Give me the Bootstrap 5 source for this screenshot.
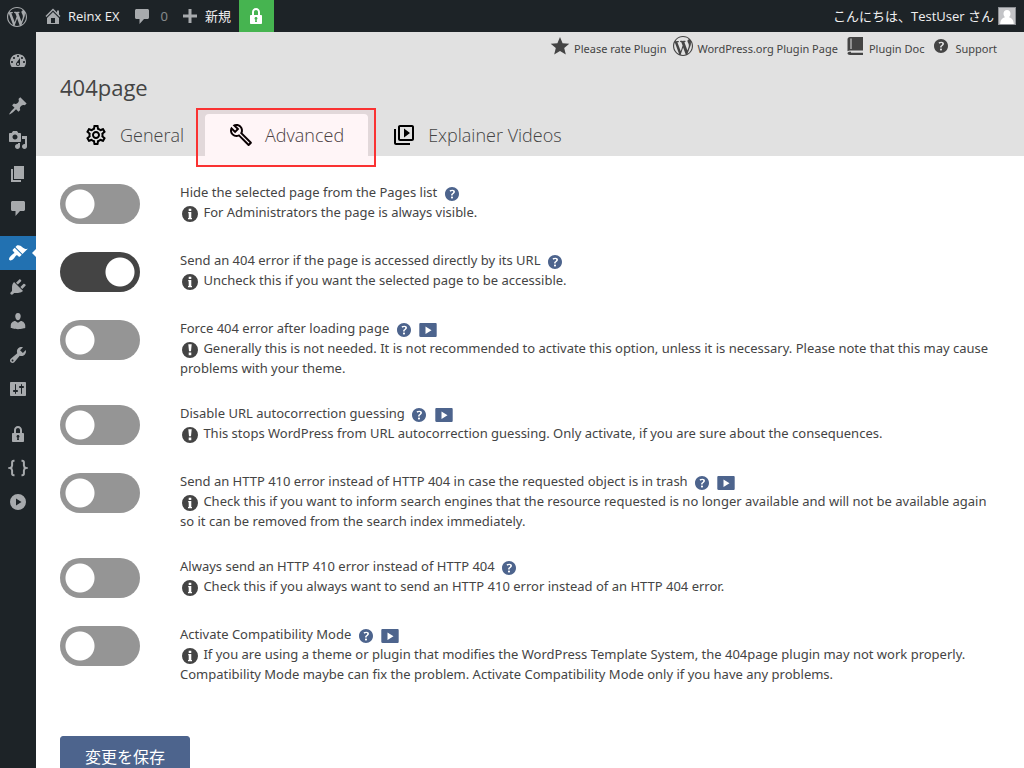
<!DOCTYPE html>
<html lang="ja">
<head>
<meta charset="utf-8">
<meta name="viewport" content="width=device-width, initial-scale=1">
<title>404page</title>
<link rel="stylesheet" href="https://cdn.jsdelivr.net/npm/bootstrap@5.3.0/dist/css/bootstrap.min.css">
<style>
  body { font-family: "Open Sans", "Noto Sans CJK JP", sans-serif; font-size: 13px; line-height: 20px; color: #444; background: #fff; }
  a { color: inherit; text-decoration: none; }
  svg { fill: currentColor; flex: none; }
  .i20 { width: 20px; height: 20px; }
  .i24 { width: 24px; height: 24px; }
  .admin-bar { height: 32px; background: #1d2327; color: #f0f0f1; z-index: 1030; padding-left: 7px; }
  .admin-bar svg { color: #a7aaad; }
  .bar-item { margin-right: 12px; }
  .bar-item svg { margin-right: 5px; }
  .admin-bar .ssl { width: 35px; background: #46b450; }
  .admin-bar .ssl svg { color: #fff; }
  .avatar { width: 18px; height: 18px; border: 1px solid #8c8f94; background: #c3c4c7; }
  .admin-menu { width: 36px; background: #1d2327; color: #a7aaad; padding-top: 12px; }
  .admin-menu a { height: 34px; }
  .admin-menu .gap-before { margin-top: 11px; }
  .admin-menu .current { background: #2271b1; color: #fff; }
  .admin-menu .current::after { content: ""; position: absolute; right: 0; top: 13px; border: 4px solid transparent; border-left: 0; border-right-color: #fff; }
  .plugin-head { background: #e1e1e1; }
  .plugin-links { font-family: "Noto Sans", sans-serif; font-size: 11px; height: 28px; padding-right: 27px; gap: 7px; }
  .plugin-links span { padding-top: 5px; }
  .plugin-head h1 { font-size: 22px; line-height: 30px; margin: 12px 0; font-weight: 400; }
  .tab-row { font-size: 18px; height: 42px; font-weight: 300; }
  .tab-row a { padding: 0 21px 0 24px; gap: 12px; border-radius: 4px 4px 0 0; }
  .tab-row svg { color: #000; }
  .tab-row .active { background: #fff; padding-right: 24px; }
  .highlight { position: absolute; inset: -6px -8px -11px -9px; border: 2px solid #fa3232; background: rgba(255, 0, 50, .04); pointer-events: none; }
  .options { padding: 26px 24px 0; font-family: "Noto Sans", "Noto Sans CJK JP", sans-serif; }
  .option { min-height: 43px; margin-bottom: 25px; gap: 40px; }
  .form-check-input.toggle { width: 80px; height: 40px; margin: 2px 0 0; flex: none; border: 0; border-radius: 20px; background: #959595 radial-gradient(circle, #fff 14px, transparent 15px) 0 0 / 40px 40px no-repeat; }
  .form-check-input.toggle:checked { background-color: #444; background-position: 40px 0; }
  .hint { color: #4d648d; }
  .hint svg { margin: -2px 0 -3px 1px; }
  .note svg { width: 20px; height: 20px; margin: -2px 0 -2px; vertical-align: middle; }
  .save { --bs-btn-bg: #4d648d; --bs-btn-border-color: #4d648d; --bs-btn-color: #fff; --bs-btn-font-size: 16px; --bs-btn-line-height: 24px; --bs-btn-padding-y: 8px; --bs-btn-padding-x: 24px; --bs-btn-border-radius: 3px; margin-top: 27px; }
</style>
</head>
<body>
<svg class="d-none" xmlns="http://www.w3.org/2000/svg">
  <symbol id="wp" viewBox="0 0 20 20"><path d="M20 10c0-5.51-4.49-10-10-10C4.48 0 0 4.49 0 10c0 5.52 4.48 10 10 10 5.51 0 10-4.48 10-10zM7.78 15.37L4.37 6.22c.55-.02 1.17-.08 1.17-.08.5-.06.44-1.13-.06-1.11 0 0-1.45.11-2.37.11-.18 0-.37 0-.58-.01C4.12 2.69 6.87 1.11 10 1.11c2.33 0 4.45.87 6.05 2.34-.68-.11-1.65.39-1.65 1.58 0 .74.45 1.36.9 2.1.35.61.55 1.36.55 2.46 0 1.49-1.4 5-1.4 5l-3.03-8.37c.54-.02.82-.17.82-.17.5-.05.44-1.25-.06-1.22 0 0-1.44.12-2.38.12-.87 0-2.33-.12-2.33-.12-.5-.03-.56 1.2-.06 1.22l.92.08 1.26 3.41zM17.41 10c.24-.64.74-1.87.43-4.25.7 1.29 1.05 2.71 1.05 4.25 0 3.29-1.73 6.24-4.4 7.78.97-2.59 1.94-5.2 2.92-7.78zM6.1 18.09C3.12 16.65 1.11 13.53 1.11 10c0-1.3.23-2.48.72-3.59C3.25 10.3 4.67 14.2 6.1 18.09zm4.03-6.63l2.58 6.98c-.86.29-1.76.45-2.71.45-.79 0-1.57-.11-2.29-.33.81-2.38 1.62-4.74 2.42-7.1z"/></symbol>
  <symbol id="home" viewBox="0 0 20 20"><path d="M16 8.5l1.53 1.53-1.06 1.06L10 4.6l-6.47 6.49-1.06-1.06L10 2.5l4 4v-2h2v4zm-6-2.46l6 5.99V18H4v-5.97zM12 17v-5H8v5h4z"/></symbol>
  <symbol id="comment" viewBox="0 0 20 20"><path d="M4.500 3h11c.8 0 1.500.7 1.500 1.500v7c0 .8-.7 1.500-1.500 1.500H12l-4.500 5v-5h-3C3.700 13 3 12.300 3 11.500v-7C3 3.700 3.700 3 4.500 3z"/></symbol>
  <symbol id="plus" viewBox="0 0 20 20"><path d="M17 8.500v3h-5.500V17h-3v-5.500H3v-3h5.500V3h3v5.500z"/></symbol>
  <symbol id="lock" viewBox="0 0 20 20"><path d="M14 9h1c.55 0 1 .45 1 1v7c0 .55-.45 1-1 1H5c-.55 0-1-.45-1-1v-7c0-.55.45-1 1-1h1V6c0-2.210 1.790-4 4-4s4 1.790 4 4v3zm-2 0V6c0-1.100-.9-2-2-2s-2 .9-2 2v3h4zm-1 7l-.36-2.150c.51-.24.86-.75.86-1.350 0-.83-.67-1.500-1.500-1.500s-1.500.67-1.500 1.500c0 .6.35 1.110.86 1.350L9 16h2z"/></symbol>
  <symbol id="dashboard" viewBox="0 0 20 20"><path fill-rule="evenodd" d="M3.76 16h12.48c1.100-1.370 1.760-3.110 1.760-5 0-4.420-3.580-8-8-8s-8 3.580-8 8c0 1.890.66 3.630 1.760 5zM10 4c.55 0 1 .45 1 1s-.45 1-1 1-1-.45-1-1 .45-1 1-1zM6 6c.55 0 1 .45 1 1s-.45 1-1 1-1-.45-1-1 .45-1 1-1zm8 0c.55 0 1 .45 1 1s-.45 1-1 1-1-.45-1-1 .45-1 1-1zm-5.370 5.550L12 7v6c0 1.100-.9 2-2 2s-2-.9-2-2c0-.57.24-1.080.63-1.450zM4 10c.55 0 1 .45 1 1s-.45 1-1 1-1-.45-1-1 .45-1 1-1zm12 0c.55 0 1 .45 1 1s-.45 1-1 1-1-.45-1-1 .45-1 1-1zm-5 3c0-.55-.45-1-1-1s-1 .45-1 1 .45 1 1 1 1-.45 1-1z"/></symbol>
  <symbol id="pin" viewBox="0 0 20 20"><path d="M10.44 3.02l1.82-1.82 6.36 6.35-1.83 1.82c-1.05-.68-2.48-.57-3.41.36l-.75.75c-.92.93-1.04 2.35-.35 3.41l-1.83 1.82-2.41-2.41-2.8 2.79c-.42.42-3.38 2.71-3.8 2.29s1.86-3.39 2.28-3.81l2.79-2.79L4.1 9.36l1.83-1.82c1.05.69 2.48.57 3.4-.36l.75-.75c.93-.92 1.05-2.35.36-3.41z"/></symbol>
  <symbol id="media" viewBox="0 0 20 20"><path d="M13 11V4c0-.55-.45-1-1-1h-1.67L9 1H5L3.67 3H2c-.55 0-1 .45-1 1v7c0 .55.45 1 1 1h10c.55 0 1-.45 1-1zM7 4.500c1.380 0 2.500 1.120 2.500 2.500S8.380 9.500 7 9.500 4.500 8.380 4.500 7 5.620 4.500 7 4.500zM14 6h5v10.500c0 1.380-1.120 2.500-2.500 2.500S14 17.880 14 16.500s1.120-2.500 2.500-2.500c.17 0 .34.02.5.05V9h-3V6zm-4 8.050V13h2v3.500c0 1.380-1.120 2.500-2.500 2.500S7 17.880 7 16.500 8.120 14 9.500 14c.17 0 .34.02.5.05z"/></symbol>
  <symbol id="pages" viewBox="0 0 20 20"><path d="M6 15V2h10v13H6zm-1 1h8v2H3V5h2v11z"/></symbol>
  <symbol id="brush" viewBox="0 0 20 20"><path d="M14.48 11.06L7.41 3.99l1.5-1.5c.5-.56 2.3-.47 3.51.32 1.21.8 1.43 1.28 2.91 2.1 1.18.64 2.45 1.26 4.45.85zm-.71.71L6.7 4.7 4.93 6.47c-.39.39-.39 1.02 0 1.41l1.06 1.06c.39.39.39 1.03 0 1.42-.6.6-1.43 1.11-2.21 1.69-.35.26-.7.53-1.01.84C1.43 14.23.4 16.08 1.4 17.07c.99 1 2.84-.03 4.18-1.36.31-.31.58-.66.85-1.02.57-.78 1.08-1.61 1.69-2.21.39-.39 1.02-.39 1.41 0l1.06 1.06c.39.39 1.02.39 1.41 0z"/></symbol>
  <symbol id="plug" viewBox="0 0 20 20"><path d="M13.11 4.36L9.87 7.6 8 5.73l3.24-3.24c.35-.34 1.05-.2 1.56.32.52.51.66 1.21.31 1.55zm-8 1.77l.91-1.12 9.01 9.01-1.19.84c-.71.71-2.63 1.16-3.82 1.16H6.14L4.9 17.26c-.59.59-1.54.59-2.12 0-.59-.58-.59-1.53 0-2.12l1.24-1.24v-3.88c0-1.13.4-3.19 1.09-3.89zm7.26 3.97l3.24-3.24c.34-.35 1.04-.21 1.55.31.52.51.66 1.21.31 1.55l-3.24 3.25z"/></symbol>
  <symbol id="user" viewBox="0 0 20 20"><path d="M10 9.25c-2.27 0-2.73-3.44-2.73-3.44C7 4.02 7.82 2 9.97 2c2.16 0 2.98 2.02 2.71 3.81 0 0-.41 3.44-2.68 3.44zm0 2.57L12.72 10c2.39 0 4.52 2.33 4.52 4.53v2.49s-3.65 1.13-7.24 1.13c-3.65 0-7.24-1.13-7.24-1.13v-2.49c0-2.25 1.94-4.48 4.47-4.48z"/></symbol>
  <symbol id="wrench" viewBox="0 0 20 20"><path d="M16.68 9.77c-1.34 1.34-3.3 1.67-4.95.99l-5.41 6.52c-.99.99-2.59.99-3.58 0s-.99-2.59 0-3.57l6.52-5.42c-.68-1.65-.35-3.61.99-4.95 1.28-1.28 3.12-1.62 4.72-1.06l-2.89 2.89 2.82 2.82 2.86-2.87c.53 1.58.18 3.39-1.08 4.65zM3.81 16.21c.4.39 1.04.39 1.43 0 .4-.4.4-1.04 0-1.43-.39-.4-1.03-.4-1.43 0-.39.39-.39 1.03 0 1.43z"/></symbol>
  <symbol id="sliders" viewBox="0 0 20 20"><path d="M18 16V4c0-.55-.45-1-1-1H3c-.55 0-1 .45-1 1v12c0 .55.45 1 1 1h14c.55 0 1-.45 1-1zM8 11h1c.55 0 1 .45 1 1s-.45 1-1 1H8v1.5c0 .28-.22.5-.5.5s-.5-.22-.5-.5V13H6c-.55 0-1-.45-1-1s.45-1 1-1h1V5.5c0-.28.22-.5.5-.5s.5.22.5.5V11zm5-2h-1c-.55 0-1-.45-1-1s.45-1 1-1h1V5.5c0-.28.22-.5.5-.5s.5.22.5.5V7h1c.55 0 1 .45 1 1s-.45 1-1 1h-1v5.5c0 .28-.22.5-.5.5s-.5-.22-.5-.5V9z"/></symbol>
  <symbol id="braces" viewBox="0 0 20 20"><path d="M6.500 2.800H5.800c-1.200 0-1.700.6-1.700 1.700v2.900c0 1.400-.6 2.200-2 2.600 1.400.4 2 1.200 2 2.600v2.900c0 1.100.5 1.700 1.700 1.700h.7M13.500 2.800h.7c1.200 0 1.700.6 1.700 1.700v2.900c0 1.400.6 2.200 2 2.600-1.400.4-2 1.200-2 2.600v2.900c0 1.100-.5 1.700-1.700 1.700h-.7" fill="none" stroke="currentColor" stroke-width="2"/></symbol>
  <symbol id="playc" viewBox="0 0 20 20"><path fill-rule="evenodd" d="M10 2a8 8 0 1 0 0 16 8 8 0 0 0 0-16zM8 6.500l5.500 3.500L8 13.500z"/></symbol>
  <symbol id="star" viewBox="0 0 20 20"><path d="M10 1l2.600 6.200 6.700.5-5.100 4.300L15.800 18.500 10 15l-5.800 3.500L5.800 12 .7 7.700l6.700-.5z"/></symbol>
  <symbol id="book" viewBox="0 0 20 20"><path fill-rule="evenodd" d="M5 1h13v13.500H5c-1 0-1.800.3-2.500.8V3.500C2.500 2 3.500 1 5 1zM5.500 2.500v10.500h1V2.500zM5 15.700h1v1H18V19H5c-1.500 0-2.500-.7-2.500-1.700s1-1.600 2.500-1.600z"/></symbol>
  <symbol id="help" viewBox="0 0 20 20"><path d="M17 10c0-3.87-3.14-7-7-7-3.87 0-7 3.13-7 7s3.13 7 7 7c3.86 0 7-3.13 7-7zm-6.3 1.48H9.14v-.43c0-.38.08-.7.24-.98s.46-.57.88-.89c.41-.29.68-.53.81-.71.14-.18.2-.39.2-.62 0-.25-.09-.44-.28-.58-.19-.13-.45-.19-.79-.19-.58 0-1.25.19-2 .57l-.64-1.28c.87-.49 1.8-.74 2.77-.74.81 0 1.45.2 1.92.58.48.39.71.91.71 1.55 0 .43-.09.8-.29 1.11-.19.32-.57.67-1.11 1.06-.38.28-.61.49-.71.63-.1.15-.15.34-.15.57v.35zm-1.47 2.74c-.18-.17-.27-.42-.27-.73 0-.33.08-.58.26-.75s.43-.25.77-.25c.32 0 .57.09.75.26s.27.42.27.74c0 .3-.09.55-.27.72-.18.18-.43.27-.75.27-.33 0-.58-.09-.76-.26z"/></symbol>
  <symbol id="video" viewBox="0 0 20 20"><path fill-rule="evenodd" d="M2.500 3h15c.8 0 1.200.5 1.200 1.200v11.600c0 .8-.5 1.200-1.200 1.200h-15c-.8 0-1.200-.5-1.200-1.200V4.200c0-.8.5-1.200 1.200-1.200zM7.500 6.500v7.500l6-3.700z"/></symbol>
  <symbol id="info" viewBox="0 0 20 20"><path fill-rule="evenodd" d="M10 2a8 8 0 1 0 0 16 8 8 0 0 0 0-16zM8.700 4.800h2.600V7H8.700zM8.200 8h3.100v6h.7v1.200H8V14h.7V9.200h-.5z"/></symbol>
  <symbol id="warn" viewBox="0 0 20 20"><path fill-rule="evenodd" d="M10 2a8 8 0 1 0 0 16 8 8 0 0 0 0-16zM8.300 4.300h3.400l-.7 7H9zM8.700 12.600h2.600v2.600H8.700z"/></symbol>
  <symbol id="gear" viewBox="0 0 24 24"><path d="M19.43 12.98c.04-.32.07-.64.07-.98 0-.34-.03-.66-.07-.98l2.11-1.65c.19-.15.24-.42.12-.64l-2-3.46c-.09-.16-.26-.25-.44-.25-.06 0-.12.01-.17.03l-2.49 1c-.52-.4-1.08-.73-1.69-.98l-.38-2.65C14.46 2.18 14.25 2 14 2h-4c-.25 0-.46.18-.49.42l-.38 2.65c-.61.25-1.17.59-1.69.98l-2.49-1c-.06-.02-.12-.03-.18-.03-.17 0-.34.09-.43.25l-2 3.46c-.13.22-.07.49.12.64l2.11 1.65c-.04.32-.07.65-.07.98 0 .33.03.66.07.98l-2.11 1.65c-.19.15-.24.42-.12.64l2 3.46c.09.16.26.25.44.25.06 0 .12-.01.17-.03l2.49-1c.52.4 1.08.73 1.69.98l.38 2.65c.03.24.24.42.49.42h4c.25 0 .46-.18.49-.42l.38-2.65c.61-.25 1.17-.59 1.69-.98l2.49 1c.06.02.12.03.18.03.17 0 .34-.09.43-.25l2-3.46c.12-.22.07-.49-.12-.64l-2.11-1.65zm-1.98-1.71c.04.31.05.52.05.73 0 .21-.02.43-.05.73l-.14 1.13.89.7 1.08.84-.7 1.21-1.27-.51-1.04-.42-.9.68c-.43.32-.84.56-1.25.73l-1.06.43-.16 1.13-.2 1.35h-1.4l-.19-1.35-.16-1.13-1.06-.43c-.43-.18-.83-.41-1.23-.71l-.91-.7-1.06.43-1.27.51-.7-1.21 1.08-.84.89-.7-.14-1.13c-.03-.31-.05-.54-.05-.74s.02-.43.05-.73l.14-1.13-.89-.7-1.08-.84.7-1.21 1.27.51 1.04.42.9-.68c.43-.32.84-.56 1.25-.73l1.06-.43.16-1.13.2-1.35h1.39l.19 1.35.16 1.13 1.06.43c.43.18.83.41 1.23.71l.91.7 1.06-.43 1.27-.51.7 1.21-1.07.85-.89.7.14 1.13zM12 8c-2.21 0-4 1.79-4 4s1.79 4 4 4 4-1.79 4-4-1.79-4-4-4zm0 6c-1.1 0-2-.9-2-2s.9-2 2-2 2 .9 2 2-.9 2-2 2z"/></symbol>
  <symbol id="build" viewBox="0 0 24 24"><path d="M22.61 18.99l-9.08-9.08c.93-2.34.45-5.1-1.44-7C9.79.61 6.21.4 3.66 2.26L7.5 6.11 6.08 7.52 2.25 3.69C.39 6.23.6 9.82 2.9 12.11c1.86 1.86 4.57 2.35 6.89 1.48l9.11 9.11c.39.39 1.02.39 1.41 0l2.3-2.3c.4-.38.4-1.01 0-1.41zm-3 1.6l-9.46-9.46c-.61.45-1.29.72-2 .82-1.36.2-2.79-.21-3.83-1.25C3.37 9.76 2.93 8.5 3 7.26l3.09 3.09 4.24-4.24-3.09-3.09c1.24-.07 2.49.37 3.44 1.31 1.08 1.08 1.49 2.57 1.24 3.96-.12.71-.42 1.37-.88 1.96l9.45 9.45-.88.89z"/></symbol>
  <symbol id="library" viewBox="0 0 24 24"><path d="M4 6H2v14c0 1.100.9 2 2 2h14v-2H4V6zm16-4H8c-1.100 0-2 .9-2 2v12c0 1.100.9 2 2 2h12c1.100 0 2-.9 2-2V4c0-1.100-.9-2-2-2zm0 14H8V4h12v12zM12 5.500v9l6-4.500z"/></symbol>
</svg>

<header class="admin-bar sticky-top d-flex align-items-center">
  <a href="#" class="bar-item" aria-label="WordPress"><svg class="i20 me-1"><use href="#wp"/></svg></a>
  <a href="#" class="bar-item d-flex align-items-center"><svg class="i20"><use href="#home"/></svg>Reinx EX</a>
  <a href="#" class="bar-item d-flex align-items-center"><svg class="i20"><use href="#comment"/></svg><span class="opacity-50 ms-1">0</span></a>
  <a href="#" class="bar-item d-flex align-items-center me-2"><svg class="i20"><use href="#plus"/></svg>新規</a>
  <a href="#" class="ssl align-self-stretch d-flex align-items-center justify-content-center" aria-label="SSL"><svg class="i20"><use href="#lock"/></svg></a>
  <a href="#" class="d-flex align-items-center ms-auto me-2">こんにちは、TestUser さん
    <svg class="avatar ms-1" viewBox="0 0 16 16"><path fill="#fff" d="M8 2c2.200 0 3.500 1.500 3.500 3.800 0 1.600-.7 2.700-1.500 3.500 2.500.8 4.500 2.200 4.800 6.700H1.200c.3-4.500 2.300-5.900 4.800-6.700-.8-.8-1.500-1.900-1.500-3.500C4.500 3.500 5.800 2 8 2z"/></svg></a>
</header>

<div class="d-flex min-vh-100">
  <nav class="admin-menu d-flex flex-column flex-shrink-0" aria-label="Admin">
    <a href="#" class="d-flex align-items-center justify-content-center" aria-label="Dashboard"><svg class="i20"><use href="#dashboard"/></svg></a>
    <a href="#" class="gap-before d-flex align-items-center justify-content-center" aria-label="Posts"><svg class="i20"><use href="#pin"/></svg></a>
    <a href="#" class="d-flex align-items-center justify-content-center" aria-label="Media"><svg class="i20"><use href="#media"/></svg></a>
    <a href="#" class="d-flex align-items-center justify-content-center" aria-label="Pages"><svg class="i20"><use href="#pages"/></svg></a>
    <a href="#" class="d-flex align-items-center justify-content-center" aria-label="Comments"><svg class="i20"><use href="#comment"/></svg></a>
    <a href="#" class="gap-before current position-relative d-flex align-items-center justify-content-center" aria-label="Appearance"><svg class="i20"><use href="#brush"/></svg></a>
    <a href="#" class="d-flex align-items-center justify-content-center" aria-label="Plugins"><svg class="i20"><use href="#plug"/></svg></a>
    <a href="#" class="d-flex align-items-center justify-content-center" aria-label="Users"><svg class="i20"><use href="#user"/></svg></a>
    <a href="#" class="d-flex align-items-center justify-content-center" aria-label="Tools"><svg class="i20"><use href="#wrench"/></svg></a>
    <a href="#" class="d-flex align-items-center justify-content-center" aria-label="Settings"><svg class="i20"><use href="#sliders"/></svg></a>
    <a href="#" class="gap-before d-flex align-items-center justify-content-center" aria-label="SSL"><svg class="i20"><use href="#lock"/></svg></a>
    <a href="#" class="d-flex align-items-center justify-content-center" aria-label="Code"><svg class="i20"><use href="#braces"/></svg></a>
    <a href="#" class="d-flex align-items-center justify-content-center" aria-label="Collapse menu"><svg class="i20"><use href="#playc"/></svg></a>
  </nav>

  <main class="flex-grow-1">
    <div class="plugin-head">
      <div class="plugin-links d-flex justify-content-end align-items-center">
        <a href="#" class="d-flex align-items-center gap-1"><svg class="i20"><use href="#star"/></svg><span>Please rate Plugin</span></a>
        <a href="#" class="d-flex align-items-center gap-1"><svg class="i20"><use href="#wp"/></svg><span>WordPress.org Plugin Page</span></a>
        <a href="#" class="d-flex align-items-center gap-1"><svg class="i20"><use href="#book"/></svg><span>Plugin Doc</span></a>
        <a href="#" class="d-flex align-items-center gap-1"><svg class="i20"><use href="#help"/></svg><span>Support</span></a>
      </div>
      <div class="px-4">
        <h1>404page</h1>
        <nav class="tab-row d-flex" aria-label="Sections">
          <a href="#" class="d-flex align-items-center"><svg class="i24"><use href="#gear"/></svg>General</a>
          <a href="#" class="active position-relative d-flex align-items-center" aria-current="page"><svg class="i24"><use href="#build"/></svg>Advanced<span class="highlight"></span></a>
          <a href="#" class="d-flex align-items-center"><svg class="i24"><use href="#library"/></svg>Explainer Videos</a>
        </nav>
      </div>
    </div>

    <form class="options">
      <div class="option d-flex">
        <input class="form-check-input toggle" type="checkbox" role="switch" id="o1">
        <div><label for="o1">Hide the selected page from the Pages list</label> <a href="#" class="hint" aria-label="Help"><svg class="i20"><use href="#help"/></svg></a>
          <div class="note"><svg><use href="#info"/></svg> For Administrators the page is always visible.</div></div>
      </div>
      <div class="option d-flex">
        <input class="form-check-input toggle" type="checkbox" role="switch" id="o2" checked>
        <div><label for="o2">Send an 404 error if the page is accessed directly by its URL</label> <a href="#" class="hint" aria-label="Help"><svg class="i20"><use href="#help"/></svg></a>
          <div class="note"><svg><use href="#info"/></svg> Uncheck this if you want the selected page to be accessible.</div></div>
      </div>
      <div class="option d-flex">
        <input class="form-check-input toggle" type="checkbox" role="switch" id="o3">
        <div><label for="o3">Force 404 error after loading page</label> <a href="#" class="hint" aria-label="Help"><svg class="i20"><use href="#help"/></svg></a> <a href="#" class="hint" aria-label="Video"><svg class="i20"><use href="#video"/></svg></a>
          <div class="note"><svg><use href="#warn"/></svg> Generally this is not needed. It is not recommended to activate this option, unless it is necessary. Please note that this may cause problems with your theme.</div></div>
      </div>
      <div class="option d-flex">
        <input class="form-check-input toggle" type="checkbox" role="switch" id="o4">
        <div><label for="o4">Disable URL autocorrection guessing</label> <a href="#" class="hint" aria-label="Help"><svg class="i20"><use href="#help"/></svg></a> <a href="#" class="hint" aria-label="Video"><svg class="i20"><use href="#video"/></svg></a>
          <div class="note"><svg><use href="#warn"/></svg> This stops WordPress from URL autocorrection guessing. Only activate, if you are sure about the consequences.</div></div>
      </div>
      <div class="option d-flex">
        <input class="form-check-input toggle" type="checkbox" role="switch" id="o5">
        <div><label for="o5">Send an HTTP 410 error instead of HTTP 404 in case the requested object is in trash</label> <a href="#" class="hint" aria-label="Help"><svg class="i20"><use href="#help"/></svg></a> <a href="#" class="hint" aria-label="Video"><svg class="i20"><use href="#video"/></svg></a>
          <div class="note"><svg><use href="#info"/></svg> Check this if you want to inform search engines that the resource requested is no longer available and will not be available again so it can be removed from the search index immediately.</div></div>
      </div>
      <div class="option d-flex">
        <input class="form-check-input toggle" type="checkbox" role="switch" id="o6">
        <div><label for="o6">Always send an HTTP 410 error instead of HTTP 404</label> <a href="#" class="hint" aria-label="Help"><svg class="i20"><use href="#help"/></svg></a>
          <div class="note"><svg><use href="#info"/></svg> Check this if you always want to send an HTTP 410 error instead of an HTTP 404 error.</div></div>
      </div>
      <div class="option d-flex">
        <input class="form-check-input toggle" type="checkbox" role="switch" id="o7">
        <div><label for="o7">Activate Compatibility Mode</label> <a href="#" class="hint" aria-label="Help"><svg class="i20"><use href="#help"/></svg></a> <a href="#" class="hint" aria-label="Video"><svg class="i20"><use href="#video"/></svg></a>
          <div class="note"><svg><use href="#info"/></svg> If you are using a theme or plugin that modifies the WordPress Template System, the 404page plugin may not work properly. Compatibility Mode maybe can fix the problem. Activate Compatibility Mode only if you have any problems.</div></div>
      </div>
      <button type="button" class="btn save">変更を保存</button>
    </form>
  </main>
</div>
<script src="https://cdn.jsdelivr.net/npm/bootstrap@5.3.0/dist/js/bootstrap.bundle.min.js"></script>
</body>
</html>
